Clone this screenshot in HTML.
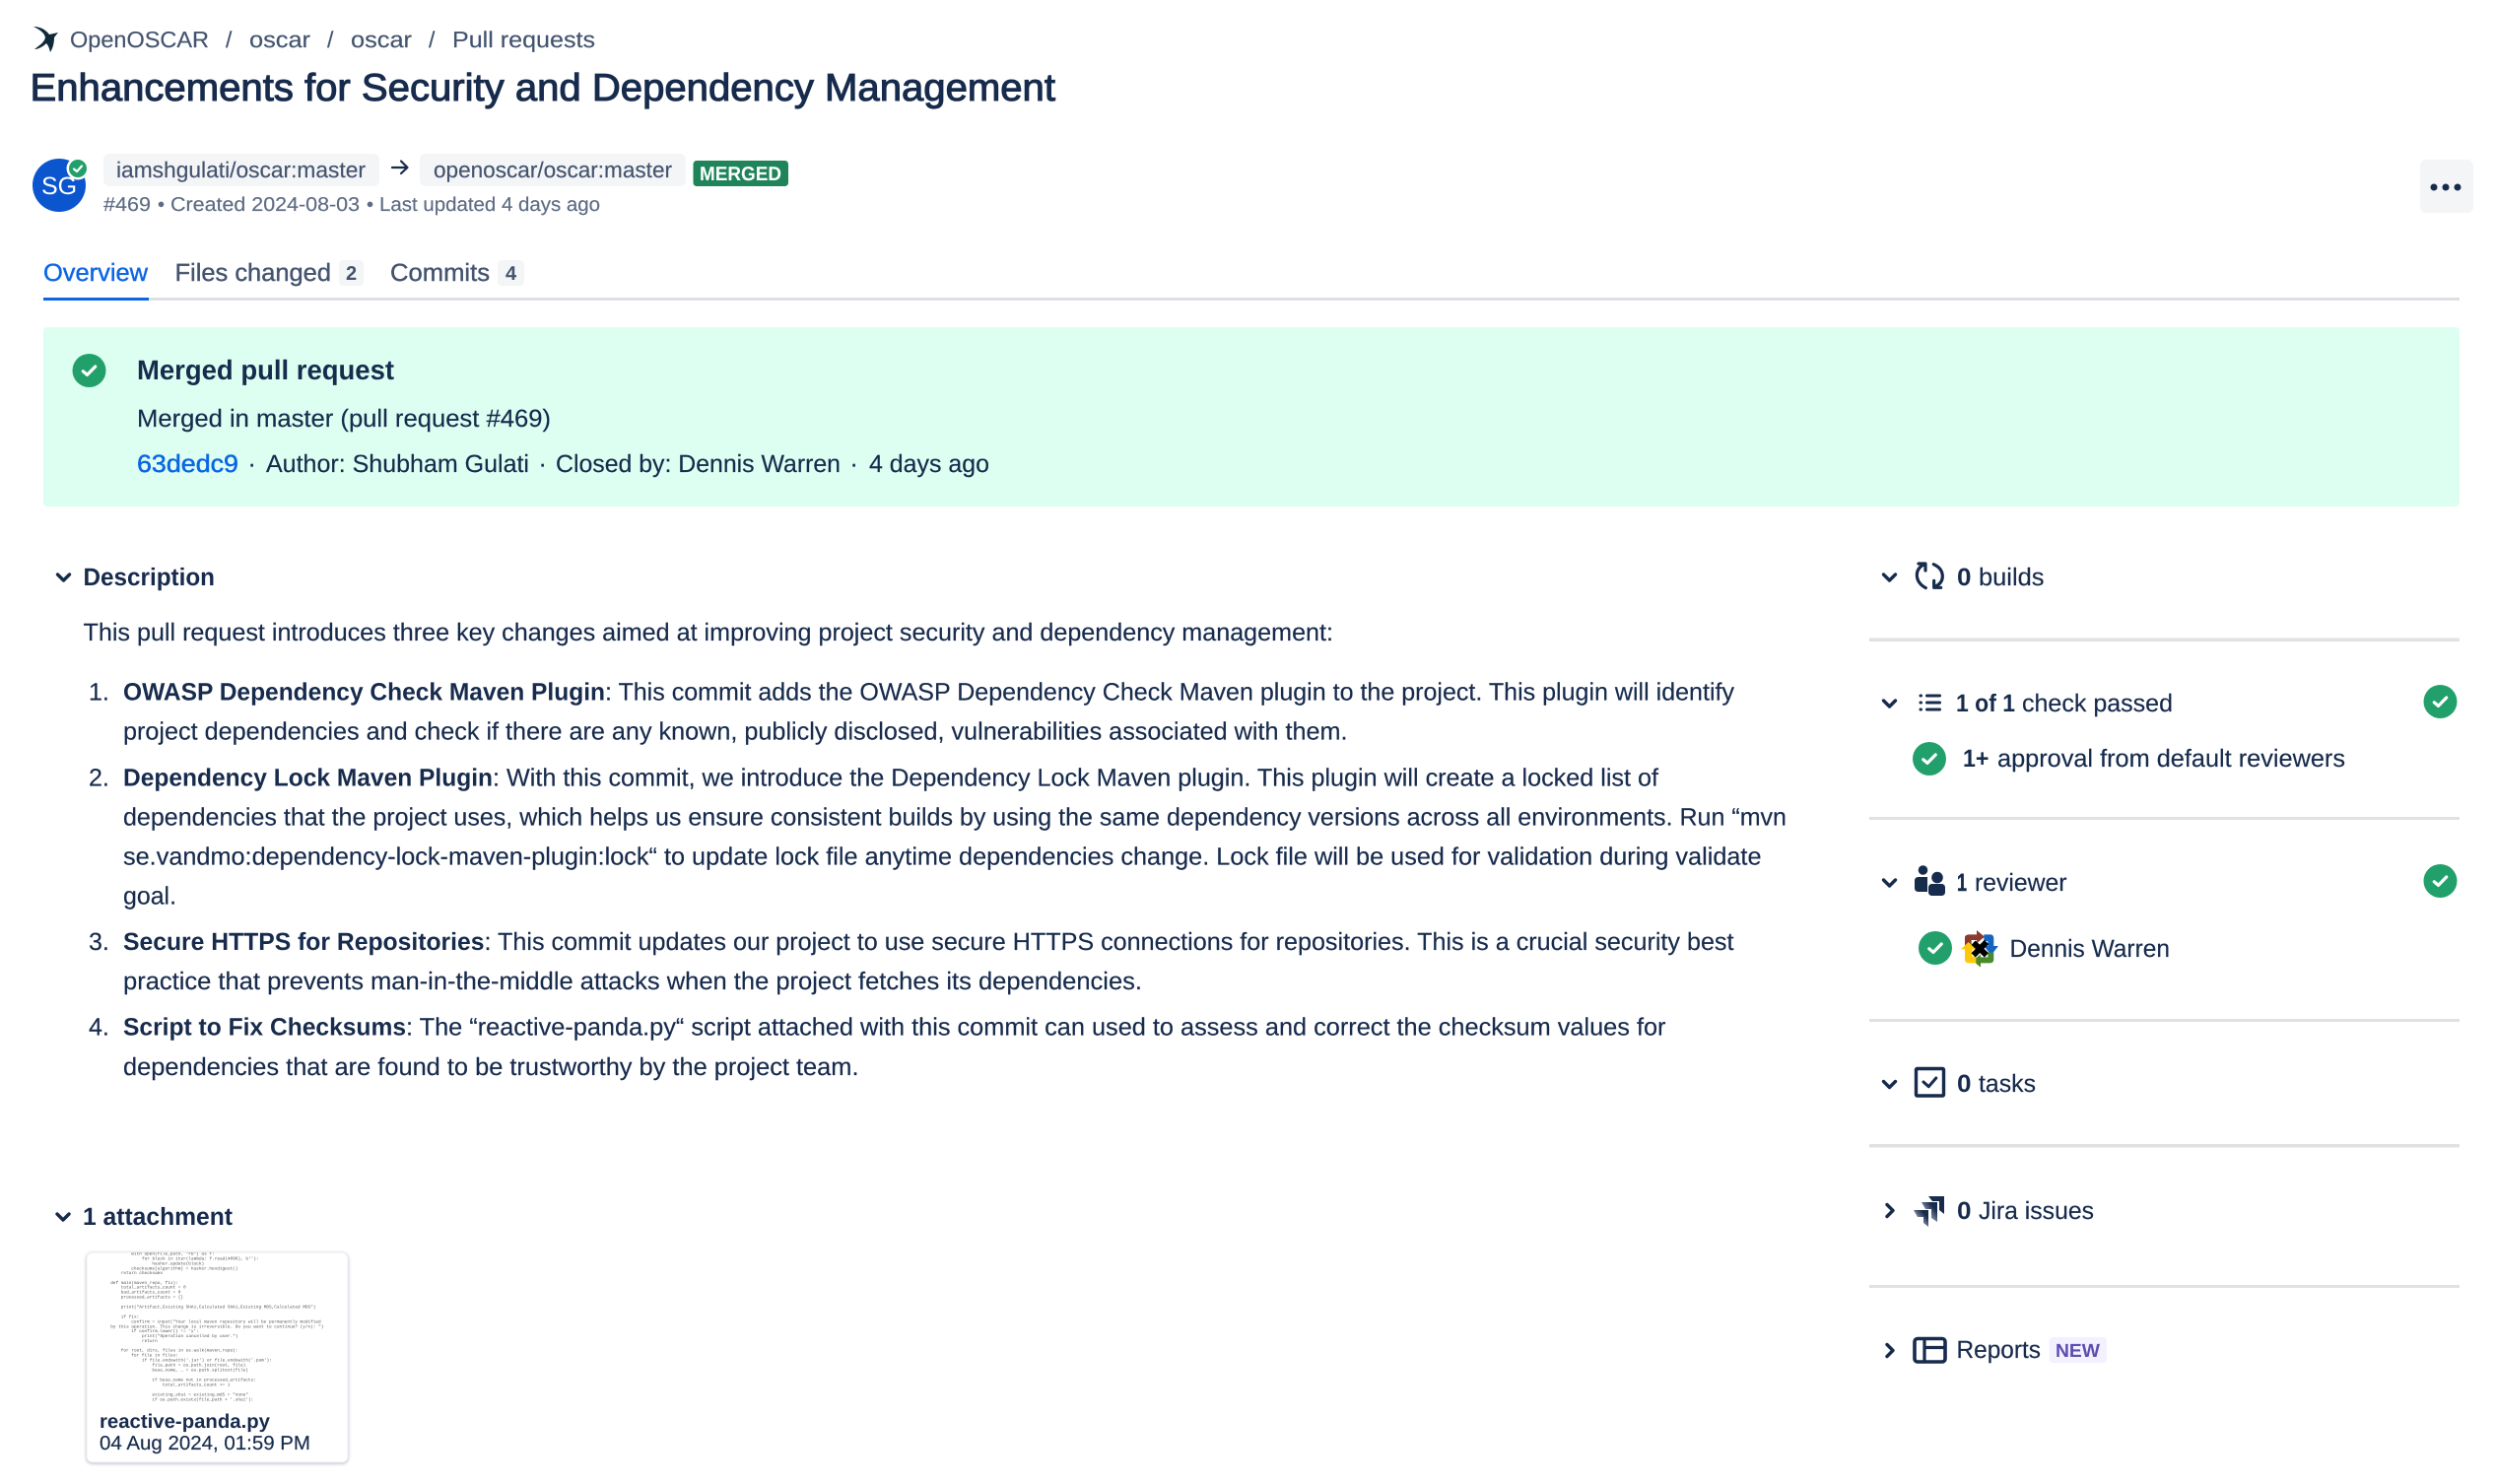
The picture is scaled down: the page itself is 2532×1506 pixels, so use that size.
<!DOCTYPE html>
<html lang="en">
<head>
<meta charset="utf-8">
<title>Enhancements for Security and Dependency Management</title>
<style>
html,body{margin:0;padding:0;background:#fff;width:2532px;height:1506px;overflow:hidden}
svg{display:block}
text{font-family:"Liberation Sans",sans-serif;fill:#172B4D;font-size:25px;text-rendering:geometricPrecision;white-space:pre;stroke:#172B4D;stroke-width:.18px}
.b{font-weight:700;stroke-width:0}
.m{stroke-width:1.05px}
.g{fill:#44546F;font-size:23px;stroke:#44546F}
.meta{fill:#5E6C84;font-size:20px;stroke:#5E6C84}
.pill{fill:#44546F;font-size:22.5px;stroke:#44546F}
.code text{font-family:"Liberation Mono",monospace;font-size:4.4px;fill:#555;stroke-width:0}
.ic{fill:none;stroke:#172B4D;stroke-linecap:round;stroke-linejoin:round}
</style>
</head>
<body>
<svg xmlns="http://www.w3.org/2000/svg" width="2532" height="1506" viewBox="0 0 2532 1506">
<defs>
  <g id="ok"><circle r="17" fill="#22A06B"/><path d="M-6.2 .8L-2 4.4L6.2 -4" fill="none" stroke="#fff" stroke-width="3.2" stroke-linecap="round" stroke-linejoin="round"/></g>
  <path id="cd" d="M-6 -3L0 3L6 -3" fill="none" stroke="#172B4D" stroke-width="3.4" stroke-linecap="round" stroke-linejoin="round"/>
  <path id="cr" d="M-3 -6L3 0L-3 6" fill="none" stroke="#172B4D" stroke-width="3.4" stroke-linecap="round" stroke-linejoin="round"/>
  <linearGradient id="jg" x1="0" y1="1" x2="1" y2="0"><stop offset="0" stop-color="#fff"/><stop offset=".75" stop-color="#172B4D"/></linearGradient>
  <clipPath id="cardclip"><rect x="88" y="1271" width="265" height="213" rx="6"/></clipPath>
</defs>

<!-- breadcrumb -->
<path d="M34 27C42 27 47 31 50 35L59 33L55 38C55 45 53 50 51 53C50 49 49 46 47 44C44 47 39 50 35 50C40 46 45 43 46 38C45 33 40 30 34 27Z" fill="#10293A"/>
<text class="g" x="71" y="48" textLength="141" lengthAdjust="spacingAndGlyphs">OpenOSCAR</text>
<text class="g" x="229" y="48">/</text>
<text class="g" x="253" y="48" textLength="62" lengthAdjust="spacingAndGlyphs">oscar</text>
<text class="g" x="332" y="48">/</text>
<text class="g" x="356" y="48" textLength="62" lengthAdjust="spacingAndGlyphs">oscar</text>
<text class="g" x="435" y="48">/</text>
<text class="g" x="459" y="48" textLength="145" lengthAdjust="spacingAndGlyphs">Pull requests</text>

<!-- title -->
<text class="m" x="30.5" y="102" style="font-size:39px" textLength="1040.5" lengthAdjust="spacingAndGlyphs">Enhancements for Security and Dependency Management</text>

<!-- avatar -->
<circle cx="60" cy="188" r="27" fill="#0B55CF"/>
<text x="60" y="197" text-anchor="middle" style="fill:#fff;stroke-width:0;font-size:25px">SG</text>
<circle cx="79" cy="171" r="11.5" fill="#fff"/>
<circle cx="79" cy="171" r="9" fill="#22A06B"/>
<path d="M75 171.5L78 174L83 168.5" fill="none" stroke="#fff" stroke-width="2.2" stroke-linecap="round" stroke-linejoin="round"/>

<!-- branches -->
<rect x="105" y="156" width="280" height="33" rx="6" fill="#F4F5F7"/>
<text class="pill" x="118" y="180" textLength="253" lengthAdjust="spacingAndGlyphs">iamshgulati/oscar:master</text>
<path class="ic" d="M398 170H413M407 163.5L413.5 170L407 176" stroke-width="2.2"/>
<rect x="426" y="156" width="270" height="33" rx="6" fill="#F4F5F7"/>
<text class="pill" x="440" y="180" textLength="242" lengthAdjust="spacingAndGlyphs">openoscar/oscar:master</text>
<rect x="703.5" y="163" width="96.5" height="26" rx="3.5" fill="#1F845A"/>
<text class="b" x="710" y="183" style="fill:#fff;font-size:20px" textLength="83" lengthAdjust="spacingAndGlyphs">MERGED</text>
<text class="meta" x="105" y="214" textLength="48" lengthAdjust="spacingAndGlyphs">#469</text>
<text class="meta" x="160" y="214">•</text>
<text class="meta" x="173" y="214" textLength="192" lengthAdjust="spacingAndGlyphs">Created 2024-08-03</text>
<text class="meta" x="372" y="214">•</text>
<text class="meta" x="385" y="214" textLength="224" lengthAdjust="spacingAndGlyphs">Last updated 4 days ago</text>

<!-- more -->
<rect x="2456" y="162" width="54" height="54" rx="6" fill="#F4F5F7"/>
<circle cx="2470" cy="190" r="3.5" fill="#172B4D"/><circle cx="2482" cy="190" r="3.5" fill="#172B4D"/><circle cx="2494" cy="190" r="3.5" fill="#172B4D"/>

<!-- tabs -->
<text x="44" y="285" style="fill:#0C66E4;stroke:#0C66E4;stroke-width:.4px" textLength="106" lengthAdjust="spacingAndGlyphs">Overview</text>
<text x="177.5" y="285" style="fill:#44546F;stroke:#44546F;stroke-width:.4px" textLength="158.5" lengthAdjust="spacingAndGlyphs">Files changed</text>
<rect x="344" y="264" width="25" height="26" rx="4" fill="#F4F5F7"/>
<text class="b" x="356.5" y="284" text-anchor="middle" style="fill:#44546F;font-size:20px">2</text>
<text x="396" y="285" style="fill:#44546F;stroke:#44546F;stroke-width:.4px" textLength="101" lengthAdjust="spacingAndGlyphs">Commits</text>
<rect x="505" y="264" width="27" height="26" rx="4" fill="#F4F5F7"/>
<text class="b" x="518.5" y="284" text-anchor="middle" style="fill:#44546F;font-size:20px">4</text>
<rect x="44" y="302" width="2452" height="3" fill="#DCDFE4"/>
<rect x="44" y="302" width="107" height="3" fill="#0C66E4"/>

<!-- banner -->
<rect x="44" y="332" width="2452" height="182" rx="4" fill="#DCFFF1"/>
<use href="#ok" x="90.5" y="376"/>
<text class="b" x="139" y="385" style="font-size:28px" textLength="261" lengthAdjust="spacingAndGlyphs">Merged pull request</text>
<text x="139" y="433" textLength="420" lengthAdjust="spacingAndGlyphs">Merged in master (pull request #469)</text>
<text x="139" y="479" style="fill:#0C66E4;stroke:#0C66E4;stroke-width:.5px" textLength="103" lengthAdjust="spacingAndGlyphs">63dedc9</text>
<text x="251.5" y="479">·</text>
<text x="270" y="479" textLength="267" lengthAdjust="spacingAndGlyphs">Author: Shubham Gulati</text>
<text x="546.5" y="479">·</text>
<text x="564" y="479" textLength="289" lengthAdjust="spacingAndGlyphs">Closed by: Dennis Warren</text>
<text x="862.5" y="479">·</text>
<text x="882" y="479" textLength="122" lengthAdjust="spacingAndGlyphs">4 days ago</text>

<!-- description -->
<use href="#cd" x="64.5" y="586"/>
<text class="b" x="84.5" y="594" textLength="133.5" lengthAdjust="spacingAndGlyphs">Description</text>
<text x="84.5" y="650" textLength="1268.5" lengthAdjust="spacingAndGlyphs">This pull request introduces three key changes aimed at improving project security and dependency management:</text>

<text x="90" y="710.7">1.</text>
<text class="b" x="125" y="710.7" textLength="489" lengthAdjust="spacingAndGlyphs">OWASP Dependency Check Maven Plugin</text>
<text x="614" y="710.7" textLength="1146" lengthAdjust="spacingAndGlyphs">: This commit adds the OWASP Dependency Check Maven plugin to the project. This plugin will identify</text>
<text x="125" y="750.7" textLength="1242.5" lengthAdjust="spacingAndGlyphs">project dependencies and check if there are any known, publicly disclosed, vulnerabilities associated with them.</text>

<text x="90" y="797.7">2.</text>
<text class="b" x="125" y="797.7" textLength="375" lengthAdjust="spacingAndGlyphs">Dependency Lock Maven Plugin</text>
<text x="500" y="797.7" textLength="1183" lengthAdjust="spacingAndGlyphs">: With this commit, we introduce the Dependency Lock Maven plugin. This plugin will create a locked list of</text>
<text x="125" y="837.7" textLength="1688" lengthAdjust="spacingAndGlyphs">dependencies that the project uses, which helps us ensure consistent builds by using the same dependency versions across all environments. Run “mvn</text>
<text x="125" y="877.7" textLength="1662.5" lengthAdjust="spacingAndGlyphs">se.vandmo:dependency-lock-maven-plugin:lock“ to update lock file anytime dependencies change. Lock file will be used for validation during validate</text>
<text x="125" y="917.7" textLength="54" lengthAdjust="spacingAndGlyphs">goal.</text>

<text x="90" y="964">3.</text>
<text class="b" x="125" y="964" textLength="366.5" lengthAdjust="spacingAndGlyphs">Secure HTTPS for Repositories</text>
<text x="491.5" y="964" textLength="1268" lengthAdjust="spacingAndGlyphs">: This commit updates our project to use secure HTTPS connections for repositories. This is a crucial security best</text>
<text x="125" y="1004" textLength="1034" lengthAdjust="spacingAndGlyphs">practice that prevents man-in-the-middle attacks when the project fetches its dependencies.</text>

<text x="90" y="1050.7">4.</text>
<text class="b" x="125" y="1050.7" textLength="287" lengthAdjust="spacingAndGlyphs">Script to Fix Checksums</text>
<text x="412" y="1050.7" textLength="1278.5" lengthAdjust="spacingAndGlyphs">: The “reactive-panda.py“ script attached with this commit can used to assess and correct the checksum values for</text>
<text x="125" y="1091" textLength="746.5" lengthAdjust="spacingAndGlyphs">dependencies that are found to be trustworthy by the project team.</text>

<!-- attachment -->
<use href="#cd" x="64" y="1235"/>
<text class="b" x="84" y="1243" textLength="152" lengthAdjust="spacingAndGlyphs">1 attachment</text>
<rect x="88" y="1271" width="265" height="213" rx="6" fill="#fff" stroke="#EBECF0" stroke-width="1" style="filter:drop-shadow(0 1.5px 1.5px rgba(9,30,66,.3))"/>
<g class="code" clip-path="url(#cardclip)">
<text x="133.3" y="1273.3">with open(file_path, "rb") as f:</text>
<text x="144" y="1278.3">for block in iter(lambda: f.read(4096), b''):</text>
<text x="154.4" y="1283.3">hasher.update(block)</text>
<text x="133.3" y="1288.3">checksums[algorithm] = hasher.hexdigest()</text>
<text x="122.8" y="1293">return checksums</text>
<text x="112.3" y="1303">def main(maven_repo, fix):</text>
<text x="122.8" y="1307.7">total_artifacts_count = 0</text>
<text x="122.8" y="1312.7">bad_artifacts_count = 0</text>
<text x="122.8" y="1317.7">processed_artifacts = {}</text>
<text x="122.8" y="1327.7">print("Artifact,Existing SHA1,Calculated SHA1,Existing MD5,Calculated MD5")</text>
<text x="122.8" y="1337.3">if fix:</text>
<text x="133.3" y="1342.3">confirm = input("Your local maven repository will be permanently modified</text>
<text x="112.3" y="1347.3">by this operation. This change is irreversible. Do you want to continue? (y/n): ")</text>
<text x="133.3" y="1352">if confirm.lower() != 'y':</text>
<text x="144" y="1357">print("Operation cancelled by user.")</text>
<text x="144" y="1362">return</text>
<text x="122.8" y="1371.7">for root, dirs, files in os.walk(maven_repo):</text>
<text x="133.3" y="1376.7">for file in files:</text>
<text x="144" y="1381.7">if file.endswith('.jar') or file.endswith('.pom'):</text>
<text x="154.4" y="1386.7">file_path = os.path.join(root, file)</text>
<text x="154.4" y="1391.7">base_name, _ = os.path.splitext(file)</text>
<text x="154.4" y="1401.7">if base_name not in processed_artifacts:</text>
<text x="164.9" y="1406.7">total_artifacts_count += 1</text>
<text x="154.4" y="1416.3">existing_sha1 = existing_md5 = "none"</text>
<text x="154.4" y="1421.3">if os.path.exists(file_path + '.sha1'):</text>
</g>
<text class="b" x="101" y="1449" style="font-size:20px" textLength="173" lengthAdjust="spacingAndGlyphs">reactive-panda.py</text>
<text x="101" y="1471" style="font-size:20px" textLength="214" lengthAdjust="spacingAndGlyphs">04 Aug 2024, 01:59 PM</text>

<!-- sidebar: builds -->
<use href="#cd" x="1917.5" y="586"/>
<g class="ic" transform="translate(1900 550) scale(.3333)" stroke-width="9.5">
  <path d="M163 140Q136 125 136 100Q136 80 158 68M141 66H162V87"/>
  <path d="M187 68Q214 80 214 105Q214 125 192 136M209 139H188V118"/>
</g>
<text class="b" x="1986" y="594" textLength="14.5" lengthAdjust="spacingAndGlyphs">0</text>
<text x="2008" y="594" textLength="66.5" lengthAdjust="spacingAndGlyphs">builds</text>
<rect x="1897" y="647.5" width="599" height="3.5" fill="#DFE1E2"/>

<!-- checks -->
<use href="#cd" x="1917.5" y="714"/>
<g class="ic" stroke-width="3"><path d="M1955.5 706H1968.5M1955.5 713H1968.5M1955.5 720H1968.5"/><path d="M1949 706H1949.5M1949 713H1949.5M1949 720H1949.5"/></g>
<text class="b" x="1985" y="722" textLength="60" lengthAdjust="spacingAndGlyphs">1 of 1</text>
<text x="2052" y="722" textLength="153" lengthAdjust="spacingAndGlyphs">check passed</text>
<use href="#ok" x="2476.5" y="712"/>
<use href="#ok" x="1958" y="770"/>
<text class="b" x="1992" y="778" textLength="26.5" lengthAdjust="spacingAndGlyphs">1+</text>
<text x="2027" y="778" textLength="353" lengthAdjust="spacingAndGlyphs">approval from default reviewers</text>
<rect x="1897" y="829" width="599" height="3" fill="#DFE1E2"/>

<!-- reviewer -->
<use href="#cd" x="1917.5" y="896"/>
<circle cx="1951.5" cy="883" r="4.8" fill="#172B4D"/>
<circle cx="1966" cy="890.5" r="5.8" fill="#172B4D"/>
<path d="M1943 894Q1943 890 1947 890H1956V905H1947Q1943 905 1943 901Z" fill="#172B4D"/>
<rect x="1957" y="897" width="17" height="12" rx="3.5" fill="#172B4D"/>
<text class="b" x="1986" y="904" style="stroke-width:.5px" textLength="10" lengthAdjust="spacingAndGlyphs">1</text>
<text x="2004" y="904" textLength="93.5" lengthAdjust="spacingAndGlyphs">reviewer</text>
<use href="#ok" x="2476.5" y="894"/>
<use href="#ok" x="1964" y="962"/>
<g transform="translate(1930 930) scale(.3333)">
  <path d="M192 100V65Q192 55 205 55H228V42L252 62L228 82V72H212V100Z" fill="#8B3A2E"/>
  <path d="M250 55H270Q280 55 280 68V90H294L272 118L250 90H262V75H250Z" fill="#1565C0"/>
  <path d="M280 110V130Q280 142 268 142H240V155L216 135L240 115V124H262V110Z" fill="#4A8A2A"/>
  <path d="M192 100H180L203 78L226 100H214V122H226V142H205Q192 142 192 130Z" fill="#FFC90B"/>
  <path d="M218 80L258 118M258 78L218 118" stroke="#000" stroke-width="18" fill="none"/>
</g>
<text x="2039.5" y="971" textLength="162.5" lengthAdjust="spacingAndGlyphs">Dennis Warren</text>
<rect x="1897" y="1034" width="599" height="3" fill="#DFE1E2"/>

<!-- tasks -->
<use href="#cd" x="1917.5" y="1100.5"/>
<rect x="1944.5" y="1084.5" width="28" height="27.5" rx="1" fill="none" stroke="#172B4D" stroke-width="3.4"/>
<path class="ic" d="M1952 1098L1957.3 1102.7L1964.8 1094" stroke-width="3"/>
<text class="b" x="1986" y="1108" textLength="14.5" lengthAdjust="spacingAndGlyphs">0</text>
<text x="2008" y="1108" textLength="58" lengthAdjust="spacingAndGlyphs">tasks</text>
<rect x="1897" y="1161" width="599" height="3.5" fill="#DFE1E2"/>

<!-- jira -->
<use href="#cr" x="1918" y="1228.5"/>
<polygon points="1957,1214 1973,1214 1973,1232 1968,1228 1968,1219 1961,1219" fill="#172B4D"/>
<polygon points="1950,1220 1966,1220 1966,1240 1960,1236 1960,1227 1954,1227" fill="url(#jg)"/>
<polygon points="1942,1228 1957,1228 1957,1245 1952,1241 1952,1235 1946,1235" fill="url(#jg)"/>
<text class="b" x="1986" y="1237" textLength="14.5" lengthAdjust="spacingAndGlyphs">0</text>
<text x="2008" y="1237" textLength="117" lengthAdjust="spacingAndGlyphs">Jira issues</text>
<rect x="1897" y="1304" width="599" height="3" fill="#DFE1E2"/>

<!-- reports -->
<use href="#cr" x="1918" y="1370.5"/>
<rect x="1943" y="1358.5" width="31" height="23.5" rx="3" fill="none" stroke="#172B4D" stroke-width="3.6"/>
<path d="M1953 1358.5V1382M1953 1367.5H1974" fill="none" stroke="#172B4D" stroke-width="3.2"/>
<text x="1985.5" y="1378" textLength="85.5" lengthAdjust="spacingAndGlyphs">Reports</text>
<rect x="2079.5" y="1357" width="58.5" height="26" rx="4" fill="#F3F0FF"/>
<text class="b" x="2086" y="1377" style="fill:#5E4DB2;stroke:#5E4DB2;font-size:19px" textLength="45" lengthAdjust="spacingAndGlyphs">NEW</text>
</svg>
</body>
</html>
